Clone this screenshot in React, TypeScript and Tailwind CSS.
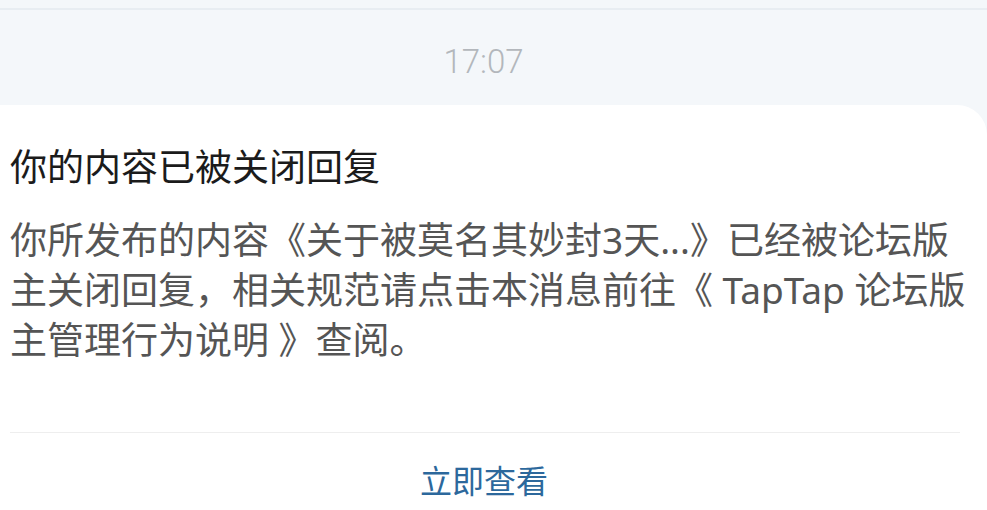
export default function App() {
  const cjk = { fontFamily: '"Noto Sans", "Noto Sans CJK SC", sans-serif' };
  return (
    <div className="w-[987px] h-[510px] overflow-hidden bg-[#f4f7fa] flex flex-col" style={cjk}>
      <div className="h-[10px] shrink-0 border-b-2 border-[#e8edf2]" />
      <div className="h-[95px] shrink-0 flex items-center justify-center pr-[20px]">
        <span className="text-[33px] leading-none font-light text-[#b3b7bc] pt-[8px]" style={{ fontFamily: 'Roboto, sans-serif' }}>
          17:07
        </span>
      </div>
      <div className="flex-1 bg-white rounded-tr-[30px] pl-[10px] pr-[8px] flex flex-col">
        <div className="pt-[37px] text-[37px] leading-[50px] text-[#1b1b1b]">你的内容已被关闭回复</div>
        <div className="mt-[23px] text-[37px] leading-[50px] text-[#555555]">
          你所发布的内容《关于被莫名其妙封3天...》已经被论坛版主关闭回复，相关规范请点击本消息前往《 TapTap 论坛版主管理行为说明 》查阅。
        </div>
        <div className="mt-[67px] mr-[19px] border-t border-[#eeeeee]" />
        <div className="pt-[28px] pr-[21px] flex justify-center">
          <span className="text-[32px] leading-[40px] text-[#2c689c]">立即查看</span>
        </div>
      </div>
    </div>
  );
}
